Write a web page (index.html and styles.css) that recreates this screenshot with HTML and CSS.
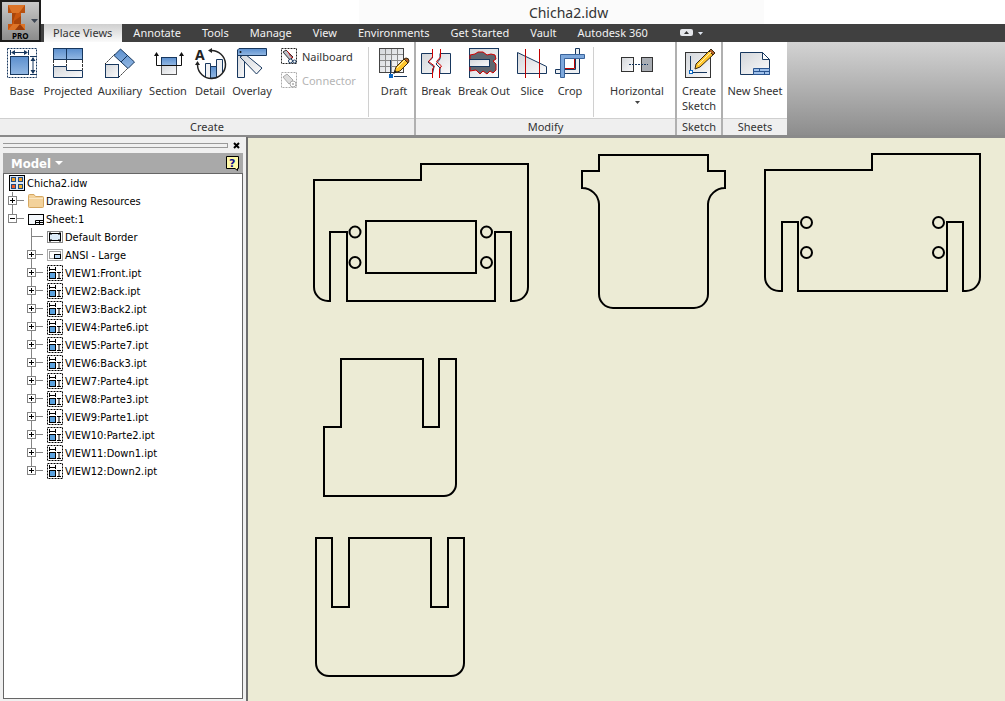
FILE: index.html
```html
<!DOCTYPE html>
<html lang="en">
<head>
  <meta charset="UTF-8">
  <title>Chicha2.idw</title>
  <link rel="stylesheet" href="styles.css">
</head>
<body>
  <!-- shared gradients and tree icons -->
  <svg class="defs" width="0" height="0" aria-hidden="true">
    <defs>
      <linearGradient id="blue" x1="0" y1="0" x2="0" y2="1">
        <stop offset="0" stop-color="#5b8fce"/>
        <stop offset="1" stop-color="#93b8e3"/>
      </linearGradient>
      <linearGradient id="pale" x1="0" y1="0" x2="1" y2="1">
        <stop offset="0" stop-color="#d3d6da"/>
        <stop offset="1" stop-color="#fbfbfc"/>
      </linearGradient>
      <symbol id="plus" viewBox="0 0 20 18">
        <path d="M4.5 0V4M4.5 13V18M9 8.5H16" stroke="#848484" fill="none"/>
        <rect x=".5" y="4.5" width="8" height="8" fill="#fff" stroke="#848484"/>
        <path d="M2 8.5H7M4.5 6V11" stroke="#000"/>
      </symbol>
      <symbol id="plus-last" viewBox="0 0 20 18">
        <path d="M4.5 0V4M9 8.5H16" stroke="#848484" fill="none"/>
        <rect x=".5" y="4.5" width="8" height="8" fill="#fff" stroke="#848484"/>
        <path d="M2 8.5H7M4.5 6V11" stroke="#000"/>
      </symbol>
      <symbol id="minus" viewBox="0 0 20 18">
        <path d="M4.5 0V4M9 8.5H16" stroke="#848484" fill="none"/>
        <rect x=".5" y="4.5" width="8" height="8" fill="#fff" stroke="#848484"/>
        <path d="M2 8.5H7" stroke="#000"/>
      </symbol>
      <symbol id="branch" viewBox="0 0 20 18">
        <path d="M4.5 0V18M4.5 8.5H16" stroke="#848484" fill="none"/>
      </symbol>
      <symbol id="view" viewBox="0 0 16 16">
        <rect x=".5" y=".5" width="15" height="15" fill="#fff" stroke="#000" stroke-dasharray="2 1"/>
        <path d="M2.500 2V6M8.500 2V6M2.500 4.500H8.500" stroke="#000" fill="none"/>
        <rect x="2.500" y="7.500" width="6" height="6" fill="#5aa2e0" stroke="#000"/>
        <path d="M10 7.500H14M10 13.500H14M12 7.500V13.500" stroke="#000" fill="none"/>
      </symbol>
    </defs>
  </svg>

  <header class="header">
    <button class="app-button" type="button" aria-label="Application menu">
      <svg width="37" height="37" viewBox="2 2 37 37">
        <path d="M8 4H25V12H21V23H25V29H8V23H12V12H8Z" fill="#c9560e"/>
        <path d="M8 4H25L21 12H12L8 9Z" fill="#dc7428"/>
        <path d="M8 4L12 12H8ZM25 4V12H19Z" fill="#b9500f"/>
        <path d="M12 12H16L12 23ZM14 20L21 15V23H14Z" fill="#a9450a"/>
        <path d="M8 29L13 23H25V29Z" fill="#dc7428"/>
        <path d="M15 29L20 23L25 29Z" fill="#9c3c08"/>
        <path d="M31 18H38L34.500 22Z" fill="#3d4654"/>
        <text class="app-edition" x="12" y="38">PRO</text>
      </svg>
    </button>
    <div class="title-bar"><h1 class="title">Chicha2.idw</h1></div>
    <nav class="tabs">
      <a class="tab active" href="#">Place Views</a>
      <a class="tab" href="#">Annotate</a>
      <a class="tab" href="#">Tools</a>
      <a class="tab" href="#">Manage</a>
      <a class="tab" href="#">View</a>
      <a class="tab" href="#">Environments</a>
      <a class="tab" href="#">Get Started</a>
      <a class="tab" href="#">Vault</a>
      <a class="tab" href="#">Autodesk 360</a>
      <button class="collapse" type="button" aria-label="Minimize ribbon">
        <svg width="24" height="8" viewBox="0 0 24 8">
          <rect width="13" height="7" rx="2" fill="#e4e6ea"/>
          <path d="M4 5H9L6.500 2Z" fill="#333"/>
          <path d="M18 3H23L20.500 6Z" fill="#dfe6f0"/>
        </svg>
      </button>
    </nav>
  </header>

  <div class="ribbon">
    <section class="panel">
      <div class="panel-tools create">
        <button class="tool narrow" type="button">
          <svg class="icon" viewBox="0 0 32 32">
            <rect x="1.500" y="1.500" width="29" height="29" fill="none" stroke="#17375e" stroke-dasharray="2 1"/>
            <rect x="4.500" y="9.500" width="18" height="18" fill="url(#blue)" stroke="#17375e"/>
            <path d="M4.500 3V8M22.500 3V8M6 5.500H21M24 9.500H30M24 27.500H30M27 11V26" stroke="#17375e" fill="none"/>
            <path d="M5 5.500L9 3V8ZM22 5.500L18 3V8ZM27 10L24.500 14H29.500ZM27 27L24.500 23H29.500Z" fill="#17375e"/>
          </svg>
          Base
        </button>
        <button class="tool large" type="button">
          <svg class="icon" viewBox="0 0 32 32">
            <rect x="1.500" y="1.500" width="29" height="11" fill="url(#blue)" stroke="#17375e"/>
            <path d="M14.500 1V13" stroke="#17375e"/>
            <path d="M1.500 13V19M14.500 13V19M30.500 13V23" stroke="#333" stroke-dasharray="3 1"/>
            <path d="M1.500 19.500H14.500V23.500H30.500V30.500H1.500Z" fill="url(#pale)" stroke="#17375e"/>
          </svg>
          Projected
        </button>
        <button class="tool medium" type="button">
          <svg class="icon" viewBox="0 0 32 32">
            <path d="M1 17L11 7M15 30L24 21" stroke="#222" stroke-dasharray="2 1"/>
            <path d="M16.500 2L30.500 15L24 21.500L10 8.500Z" fill="url(#blue)" stroke="#17375e"/>
            <path d="M23.500 8.500L17 15" stroke="#17375e"/>
            <rect x="1.500" y="17.500" width="13" height="13" fill="url(#pale)" stroke="#17375e"/>
          </svg>
          Auxiliary
        </button>
        <button class="tool medium" type="button">
          <svg class="icon" viewBox="0 0 32 32">
            <rect x="9.500" y="10.500" width="15" height="8" fill="url(#blue)" stroke="#17375e"/>
            <rect x="9.500" y="18.500" width="15" height="9" fill="url(#pale)" stroke="#555"/>
            <path d="M4.500 7V18.500H29.500V7" fill="none" stroke="#111"/>
            <path d="M4.500 5L2 9H7ZM29.500 5L27 9H32Z" fill="#111"/>
          </svg>
          Section
        </button>
        <button class="tool narrow" type="button">
          <svg class="icon" viewBox="0 0 32 32">
            <path d="M11.500 30V16.500H16.500V30M22.500 30V12.500H28.500V25" fill="#f1f2f4" stroke="#17375e"/>
            <path d="M16.500 31V19.500H22.500V31Z" fill="url(#blue)" stroke="#17375e"/>
            <path d="M17 3.500A14 14 0 1 1 3.500 18" fill="none" stroke="#222" stroke-width="1.500"/>
            <path d="M14 3.500L18 1V6ZM3.500 14L1 18H6Z" fill="#222"/>
            <text class="icon-letter" x="1" y="13">A</text>
          </svg>
          Detail
        </button>
        <button class="tool medium" type="button">
          <svg class="icon" viewBox="0 0 32 32">
            <path d="M1.500 5H8.500V30.500H1.500Z" fill="url(#pale)" stroke="#17375e"/>
            <path d="M4 10L9 7L26 21L20.500 27Z" fill="url(#pale)" stroke="#17375e"/>
            <path d="M3 1.500H30.500V8.500H1.500V3Z" fill="url(#blue)" stroke="#17375e"/>
            <circle cx="4.500" cy="5" r="1" fill="#111"/>
          </svg>
          Overlay
        </button>
        <div class="small-tools">
          <button class="small-tool" type="button">
            <svg width="16" height="16" viewBox="0 0 16 16">
              <rect x=".5" y=".5" width="15" height="15" fill="#fff" stroke="#222" stroke-dasharray="2 1"/>
              <path d="M2 4L5 2L12 9L9 12Z" fill="#b9bec6" stroke="#333"/>
              <path d="M6 3C9 5 8 8 12 10" stroke="#d00000" fill="none"/>
              <circle cx="9.500" cy="13" r="2" fill="#fff" stroke="#17375e"/>
              <circle cx="13.500" cy="13.500" r="1.500" fill="#fff" stroke="#17375e"/>
            </svg>
            Nailboard
          </button>
          <button class="small-tool" type="button" disabled>
            <svg width="16" height="16" viewBox="0 0 16 16">
              <rect x=".5" y=".5" width="15" height="15" fill="#fff" stroke="#aaa" stroke-dasharray="2 1"/>
              <path d="M2 5L6 2L12 8L8 12Z" fill="#ddd" stroke="#aaa"/>
              <circle cx="12" cy="12" r="3" fill="#fff" stroke="#aaa"/>
              <circle cx="12" cy="12" r="1" fill="#aaa"/>
            </svg>
            Connector
          </button>
        </div>
        <span class="separator"></span>
        <button class="tool" type="button">
          <svg class="icon" viewBox="0 0 32 32">
            <rect x="1.500" y="1.500" width="24" height="24" fill="url(#pale)" stroke="#444"/>
            <path d="M7.500 2V25M13.500 2V25M19.500 2V25M2 7.500H25M2 13.500H25M2 19.500H25" stroke="#8a8a8a"/>
            <path d="M12.500 13V27M16 29.500H29" stroke="#17375e"/>
            <path d="M16 26L18 20L26 12L30 16L22 24Z" fill="#ffc62e" stroke="#3b2a10"/>
            <path d="M19 21L27 13" stroke="#fff2b0"/>
            <path d="M26 12L28 11Q31 11 31 14L30 16Z" fill="#b5622a" stroke="#3b2a10"/>
            <path d="M15 27L17 23L19 25Z" fill="#222"/>
            <rect x="11" y="27" width="4" height="4" fill="#0a66c2"/>
          </svg>
          Draft
        </button>
      </div>
      <h2 class="panel-title">Create</h2>
    </section>

    <section class="panel">
      <div class="panel-tools">
        <button class="tool" type="button">
          <svg class="icon" viewBox="0 0 32 32">
            <path d="M1.500 6.500H12.500V11L8 15L14 20L12.500 26.500H1.500ZM20 6.500H30.500V26.500H20V21L16 17L20 12Z" fill="url(#pale)" stroke="#17375e"/>
            <path d="M12.500 2V10L8.500 14.500L14.500 19L12.500 22V31M20.500 2V10L16.500 14.500L21.500 19L19.500 22V31" fill="none" stroke="#d00000"/>
          </svg>
          Break
        </button>
        <button class="tool large" type="button">
          <svg class="icon" viewBox="0 0 32 32">
            <rect x="1.500" y="1.500" width="29" height="29" fill="url(#pale)" stroke="#17375e"/>
            <path d="M2 8L7 7L10 5H15L19 8L23 7L27 8L28 12L25 14L28 17V23L25 26L22 24L19 27L15 24L12 27L8 23L2 24Z" fill="#5f666f" stroke="#d00000"/>
            <rect x="1.500" y="12.500" width="20" height="7" fill="url(#pale)" stroke="#17375e"/>
          </svg>
          Break Out
        </button>
        <button class="tool" type="button">
          <svg class="icon" viewBox="0 0 32 32">
            <path d="M1.500 5.500L30.500 19.500V26.500H1.500Z" fill="url(#pale)" stroke="#17375e"/>
            <path d="M9.500 2V31M23.500 2V31" stroke="#c00000"/>
          </svg>
          Slice
        </button>
        <button class="tool narrow" type="button">
          <svg class="icon" viewBox="0 0 32 32">
            <path d="M21.500 1.500H25.500V26.500H1.500V22.500H21.500Z" fill="#edf0f4" stroke="#17375e"/>
            <path d="M11 21.500H20.500V12" fill="none" stroke="#c00000"/>
            <path d="M6.500 7.500H30.500V11.500H10.500V30.500H6.500Z" fill="#7ea8dc" stroke="#3a649c"/>
          </svg>
          Crop
        </button>
        <span class="separator"></span>
        <button class="tool xlarge" type="button">
          <svg class="icon" viewBox="0 0 32 32">
            <rect x=".5" y="10.500" width="12" height="14" fill="url(#pale)" stroke="#333"/>
            <rect x="20.500" y="10.500" width="11" height="14" fill="#a9adb3" stroke="#333"/>
            <path d="M8 17.500H27" stroke="#17375e" stroke-dasharray="2 1"/>
          </svg>
          Horizontal
          <svg class="drop" width="5" height="3" viewBox="0 0 5 3"><path d="M0 0H5L2.500 3Z" fill="#444"/></svg>
        </button>
      </div>
      <h2 class="panel-title">Modify</h2>
    </section>

    <section class="panel">
      <div class="panel-tools single">
        <button class="tool" type="button">
          <svg class="icon" viewBox="0 0 32 32">
            <rect x="2.500" y="5.500" width="25" height="25" fill="url(#pale)" stroke="#333"/>
            <path d="M7.500 9V25.500H24" fill="none" stroke="#17375e"/>
            <rect x="6.500" y="23.500" width="3" height="3" fill="#fff" stroke="#0a66c2"/>
            <path d="M12 22L13 17L27 3L31 7L17 20Z" fill="#ffc62e" stroke="#3b2a10"/>
            <path d="M26 4L28 2L32 6L30 8Z" fill="#b5622a" stroke="#3b2a10"/>
            <path d="M15 18L28 5" stroke="#fff2b0"/>
          </svg>
          Create<br>Sketch
        </button>
      </div>
      <h2 class="panel-title">Sketch</h2>
    </section>

    <section class="panel">
      <div class="panel-tools sheets">
        <button class="tool large" type="button">
          <svg class="icon" viewBox="0 0 32 32">
            <path d="M1.500 5.500H23.500L30.500 12.500V27.500H1.500Z" fill="url(#pale)" stroke="#17375e"/>
            <path d="M23.500 5.500V12.500H30.500Z" fill="#fff" stroke="#17375e"/>
            <path d="M14.500 21.500H30.500V27.500H14.500ZM14.500 24.500H30.500M20.500 21.500V24.500M25.500 24.500V27.500" fill="#9fc0ea" stroke="#2a5590"/>
          </svg>
          New Sheet
        </button>
      </div>
      <h2 class="panel-title">Sheets</h2>
    </section>
  </div>

  <main class="workspace">
    <aside class="browser">
      <div class="grip">
        <span class="grip-bar"></span>
        <button class="close" type="button" aria-label="Close">
          <svg width="7" height="7" viewBox="0 0 7 7"><path d="M1 1L6 6M6 1L1 6" stroke="#000" stroke-width="2"/></svg>
        </button>
      </div>
      <div class="browser-head">
        <button class="model" type="button">
          Model
          <svg width="8" height="4" viewBox="0 0 8 4"><path d="M0 0H8L4 4Z" fill="#fff"/></svg>
        </button>
        <button class="help" type="button" aria-label="Help">
          <svg width="14" height="15" viewBox="0 0 14 15">
            <path d="M.5 .5H12.500V12.500H11.500V14.500L9 12.500H.5Z" fill="#fff9a8" stroke="#000"/>
            <text class="help-mark" x="3" y="11">?</text>
          </svg>
        </button>
      </div>
      <ul class="tree">
        <li class="row root">
          <svg width="16" height="16" viewBox="0 0 16 16">
            <rect x=".5" y=".5" width="15" height="15" fill="#d9e8f8" stroke="#000"/>
            <rect x="2.500" y="2.500" width="4" height="4" fill="#f4a024" stroke="#234a7c"/>
            <rect x="9.500" y="2.500" width="4" height="4" fill="#f4a024" stroke="#234a7c"/>
            <rect x="2.500" y="9.500" width="4" height="4" fill="#f05a28" stroke="#234a7c"/>
            <rect x="9.500" y="9.500" width="4" height="4" fill="#f4b024" stroke="#234a7c"/>
          </svg>
          Chicha2.idw
        </li>
        <li class="row">
          <button class="toggle" type="button" aria-label="Expand"><svg width="20" height="18"><use href="#plus"/></svg></button>
          <svg width="16" height="16" viewBox="0 0 16 16">
            <path d="M.5 2.500Q.5 1.500 1.500 1.500H6L7.500 3.500H14.500Q15.500 3.500 15.500 4.500V13.500Q15.500 14.500 14.500 14.500H1.500Q.5 14.500 .5 13.500Z" fill="#f3d29b" stroke="#d6a862"/>
            <path d="M1 5.500H15" stroke="#fbe7c4"/>
          </svg>
          Drawing Resources
        </li>
        <li class="row">
          <button class="toggle" type="button" aria-label="Collapse"><svg width="20" height="18"><use href="#minus"/></svg></button>
          <svg width="16" height="16" viewBox="0 0 16 16">
            <rect x=".5" y="3.500" width="15" height="10" fill="#f4f8fc" stroke="#000"/>
            <path d="M7.500 9.500H15M7.500 9.500V13M7.500 11.500H15M11.500 9.500V13" stroke="#000"/>
          </svg>
          Sheet:1
        </li>
        <li class="row child">
          <svg width="20" height="18"><use href="#branch"/></svg>
          <svg width="16" height="16" viewBox="0 0 16 16">
            <rect x=".5" y="2.500" width="15" height="11" fill="#fff" stroke="#888"/>
            <rect x="2.500" y="4.500" width="11" height="7" fill="#dcebf8" stroke="#000"/>
            <path d="M2 4H4V6M14 4H12V6M2 12H4V10M14 12H12V10" stroke="#000" fill="none"/>
          </svg>
          Default Border
        </li>
        <li class="row child">
          <button class="toggle" type="button" aria-label="Expand"><svg width="20" height="18"><use href="#plus"/></svg></button>
          <svg width="16" height="16" viewBox="0 0 16 16">
            <rect x=".5" y="2.500" width="15" height="11" fill="#fff" stroke="#aaa"/>
            <rect x="2.500" y="4.500" width="11" height="7" fill="#fff" stroke="#999"/>
            <rect x="7.500" y="7.500" width="6" height="4" fill="#bcd8f2" stroke="#000"/>
          </svg>
          ANSI - Large
        </li>
        <li class="row child">
          <button class="toggle" type="button" aria-label="Expand"><svg width="20" height="18"><use href="#plus"/></svg></button>
          <svg width="16" height="16"><use href="#view"/></svg>
          VIEW1:Front.ipt
        </li>
        <li class="row child">
          <button class="toggle" type="button" aria-label="Expand"><svg width="20" height="18"><use href="#plus"/></svg></button>
          <svg width="16" height="16"><use href="#view"/></svg>
          VIEW2:Back.ipt
        </li>
        <li class="row child">
          <button class="toggle" type="button" aria-label="Expand"><svg width="20" height="18"><use href="#plus"/></svg></button>
          <svg width="16" height="16"><use href="#view"/></svg>
          VIEW3:Back2.ipt
        </li>
        <li class="row child">
          <button class="toggle" type="button" aria-label="Expand"><svg width="20" height="18"><use href="#plus"/></svg></button>
          <svg width="16" height="16"><use href="#view"/></svg>
          VIEW4:Parte6.ipt
        </li>
        <li class="row child">
          <button class="toggle" type="button" aria-label="Expand"><svg width="20" height="18"><use href="#plus"/></svg></button>
          <svg width="16" height="16"><use href="#view"/></svg>
          VIEW5:Parte7.ipt
        </li>
        <li class="row child">
          <button class="toggle" type="button" aria-label="Expand"><svg width="20" height="18"><use href="#plus"/></svg></button>
          <svg width="16" height="16"><use href="#view"/></svg>
          VIEW6:Back3.ipt
        </li>
        <li class="row child">
          <button class="toggle" type="button" aria-label="Expand"><svg width="20" height="18"><use href="#plus"/></svg></button>
          <svg width="16" height="16"><use href="#view"/></svg>
          VIEW7:Parte4.ipt
        </li>
        <li class="row child">
          <button class="toggle" type="button" aria-label="Expand"><svg width="20" height="18"><use href="#plus"/></svg></button>
          <svg width="16" height="16"><use href="#view"/></svg>
          VIEW8:Parte3.ipt
        </li>
        <li class="row child">
          <button class="toggle" type="button" aria-label="Expand"><svg width="20" height="18"><use href="#plus"/></svg></button>
          <svg width="16" height="16"><use href="#view"/></svg>
          VIEW9:Parte1.ipt
        </li>
        <li class="row child">
          <button class="toggle" type="button" aria-label="Expand"><svg width="20" height="18"><use href="#plus"/></svg></button>
          <svg width="16" height="16"><use href="#view"/></svg>
          VIEW10:Parte2.ipt
        </li>
        <li class="row child">
          <button class="toggle" type="button" aria-label="Expand"><svg width="20" height="18"><use href="#plus"/></svg></button>
          <svg width="16" height="16"><use href="#view"/></svg>
          VIEW11:Down1.ipt
        </li>
        <li class="row child">
          <button class="toggle" type="button" aria-label="Expand"><svg width="20" height="18"><use href="#plus-last"/></svg></button>
          <svg width="16" height="16"><use href="#view"/></svg>
          VIEW12:Down2.ipt
        </li>
      </ul>
    </aside>

    <div class="sheet">
      <svg class="drawing" width="757" height="563" viewBox="248 138 757 563">
        <!-- front -->
        <path d="M314 180H421V164H528V287A14 14 0 0 1 514 301H511V232H495V301H347V232H330V301H328A14 14 0 0 1 314 287Z"/>
        <rect x="366" y="221" width="110" height="52"/>
        <circle cx="355" cy="232" r="5.500"/>
        <circle cx="355" cy="262.500" r="5.500"/>
        <circle cx="486.500" cy="232" r="5.500"/>
        <circle cx="486.500" cy="262.500" r="5.500"/>
        <!-- back -->
        <path d="M599 155H708V171H725V188A17 17 0 0 0 708 204V294A14 14 0 0 1 694 308H613A14 14 0 0 1 599 294V204A17 17 0 0 0 582 188V171H599Z"/>
        <!-- back 2 -->
        <path d="M765 170H872V154H980V277A14 14 0 0 1 966 291H963V222H947V291H798V222H782V291H779A14 14 0 0 1 765 277Z"/>
        <circle cx="806.500" cy="222.500" r="5.500"/>
        <circle cx="806.500" cy="252.500" r="5.500"/>
        <circle cx="938.500" cy="222.500" r="5.500"/>
        <circle cx="938.500" cy="252.500" r="5.500"/>
        <!-- parts -->
        <path d="M341 359H423V427H439V359H456V484A12 12 0 0 1 444 496H324V427H341Z"/>
        <path d="M316 538H332V607H349V538H431V607H448V538H464V663A13 13 0 0 1 451 676H329A13 13 0 0 1 316 663Z"/>
      </svg>
    </div>
  </main>
</body>
</html>
```
FILE: styles.css
```css
* {
  box-sizing: border-box;
}
body {
  margin: 0;
  height: 100vh;
  display: flex;
  flex-direction: column;
  overflow: hidden;
  font-family: "Noto Sans", sans-serif;
  font-size: 11px;
  color: #333;
  background: #f0f0f0;
}
button {
  margin: 0;
  padding: 0;
  border: none;
  background: none;
  font: inherit;
  color: inherit;
}
svg {
  display: block;
  flex: none;
  overflow: visible;
}
.defs {
  position: absolute;
}

/* title and tabs */
.header {
  display: grid;
  grid-template-columns: 41px 1fr;
  grid-template-rows: 24px 18px;
  background: #fff;
}
.app-button {
  grid-row: 1 / 3;
  border: 2px solid #1c1c1c;
  background: linear-gradient(#c9c9c9, #8c8c8c);
}
.app-edition {
  font: bold 8px "Noto Sans", sans-serif;
  fill: #000;
}
.title-bar {
  display: flex;
}
.title {
  width: 42%;
  margin: 0 0 0 33%;
  padding-left: 14px;
  background: #fbfbfb;
  font-size: 14px;
  font-weight: normal;
  line-height: 25px;
  text-align: center;
}
.tabs {
  display: flex;
  align-items: stretch;
  gap: 1px;
  padding-left: 3px;
  background: #404040;
}
.tab {
  padding: 0 10px;
  line-height: 18px;
  color: #f2f2f2;
  text-decoration: none;
  white-space: nowrap;
}
.tab.active {
  padding-left: 9px;
  color: #333;
  background: linear-gradient(#cfcfcf, #fafafa);
}
.collapse {
  margin-left: 21px;
}

/* ribbon */
.ribbon {
  display: flex;
  background: linear-gradient(#d3d3d3, #8d8d8d);
  border-bottom: 2px solid #8a8a8a;
}
.panel {
  display: flex;
  flex-direction: column;
  background: #fff;
  border-right: 2px solid #b0b0b0;
}
.panel:last-child {
  border-right: none;
}
.panel-tools {
  display: flex;
  height: 76px;
  padding-top: 5px;
}
.panel-tools.create {
  padding-left: 4px;
}
.panel-tools.single {
  padding-left: 2px;
  padding-right: 2px;
}
.panel-tools.sheets {
  padding-left: 4px;
  padding-right: 4px;
}
.tool {
  display: flex;
  flex-direction: column;
  align-items: center;
  width: 40px;
  line-height: 15px;
  white-space: nowrap;
}
.tool.narrow {
  width: 36px;
}
.tool.medium {
  width: 48px;
}
.tool.large {
  width: 56px;
}
.tool.xlarge {
  width: 76px;
}
.icon {
  width: 32px;
  height: 32px;
  margin-bottom: 4px;
}
.drop {
  margin-top: 3px;
}
.small-tools {
  display: flex;
  flex-direction: column;
  gap: 6px;
  width: 87px;
  padding-left: 5px;
}
.small-tool {
  display: flex;
  align-items: center;
  gap: 5px;
  height: 18px;
}
.small-tool:disabled {
  color: #b4b4b4;
}
.separator {
  width: 1px;
  height: 70px;
  margin: 0 5px;
  background: #d0d0d0;
}
.panel-title {
  margin: 0;
  height: 17px;
  background: #efefef;
  border-top: 1px solid #cfcfcf;
  font-size: 11px;
  font-weight: normal;
  line-height: 16px;
  text-align: center;
}

/* model browser */
.workspace {
  flex: 1;
  display: flex;
  min-height: 0;
}
.browser {
  display: flex;
  flex-direction: column;
  width: 248px;
  padding: 0 3px 2px;
  border-right: 2px solid #6e6e6e;
  font-family: "DejaVu Sans Condensed", "DejaVu Sans", sans-serif;
  color: #000;
}
.grip {
  display: flex;
  align-items: center;
  gap: 5px;
  height: 16px;
}
.grip-bar {
  flex: 1;
  height: 5px;
  border: solid #999;
  border-width: 1px 1px 1px 0;
}
.close {
  margin-right: 3px;
}
.browser-head {
  display: flex;
  justify-content: space-between;
  align-items: center;
  height: 20px;
  padding: 0 3px 0 8px;
  background: #a9a9a9;
}
.model {
  display: flex;
  align-items: center;
  gap: 4px;
  font-size: 13px;
  font-weight: bold;
  color: #fff;
}
.help-mark {
  font: bold 11px "DejaVu Sans", sans-serif;
  fill: #10108c;
}
.tree {
  flex: 1;
  margin: 0;
  padding: 0;
  list-style: none;
  background: #fff;
  border: 1px solid #666;
}
.row {
  display: flex;
  align-items: center;
  height: 18px;
  padding-left: 4px;
  white-space: nowrap;
}
.row.root {
  padding-left: 5px;
}
.row.child {
  padding-left: 23px;
}
.row > svg:last-of-type {
  margin-right: 2px;
}

/* drawing sheet */
.sheet {
  flex: 1;
  overflow: hidden;
  background: #ecebd5;
  border-top: 1px solid #8a8a8a;
}
.drawing {
  fill: none;
  stroke: #000;
  stroke-width: 2;
}
.icon-letter {
  font: bold 14px "Noto Sans", sans-serif;
  fill: #222;
}
```
